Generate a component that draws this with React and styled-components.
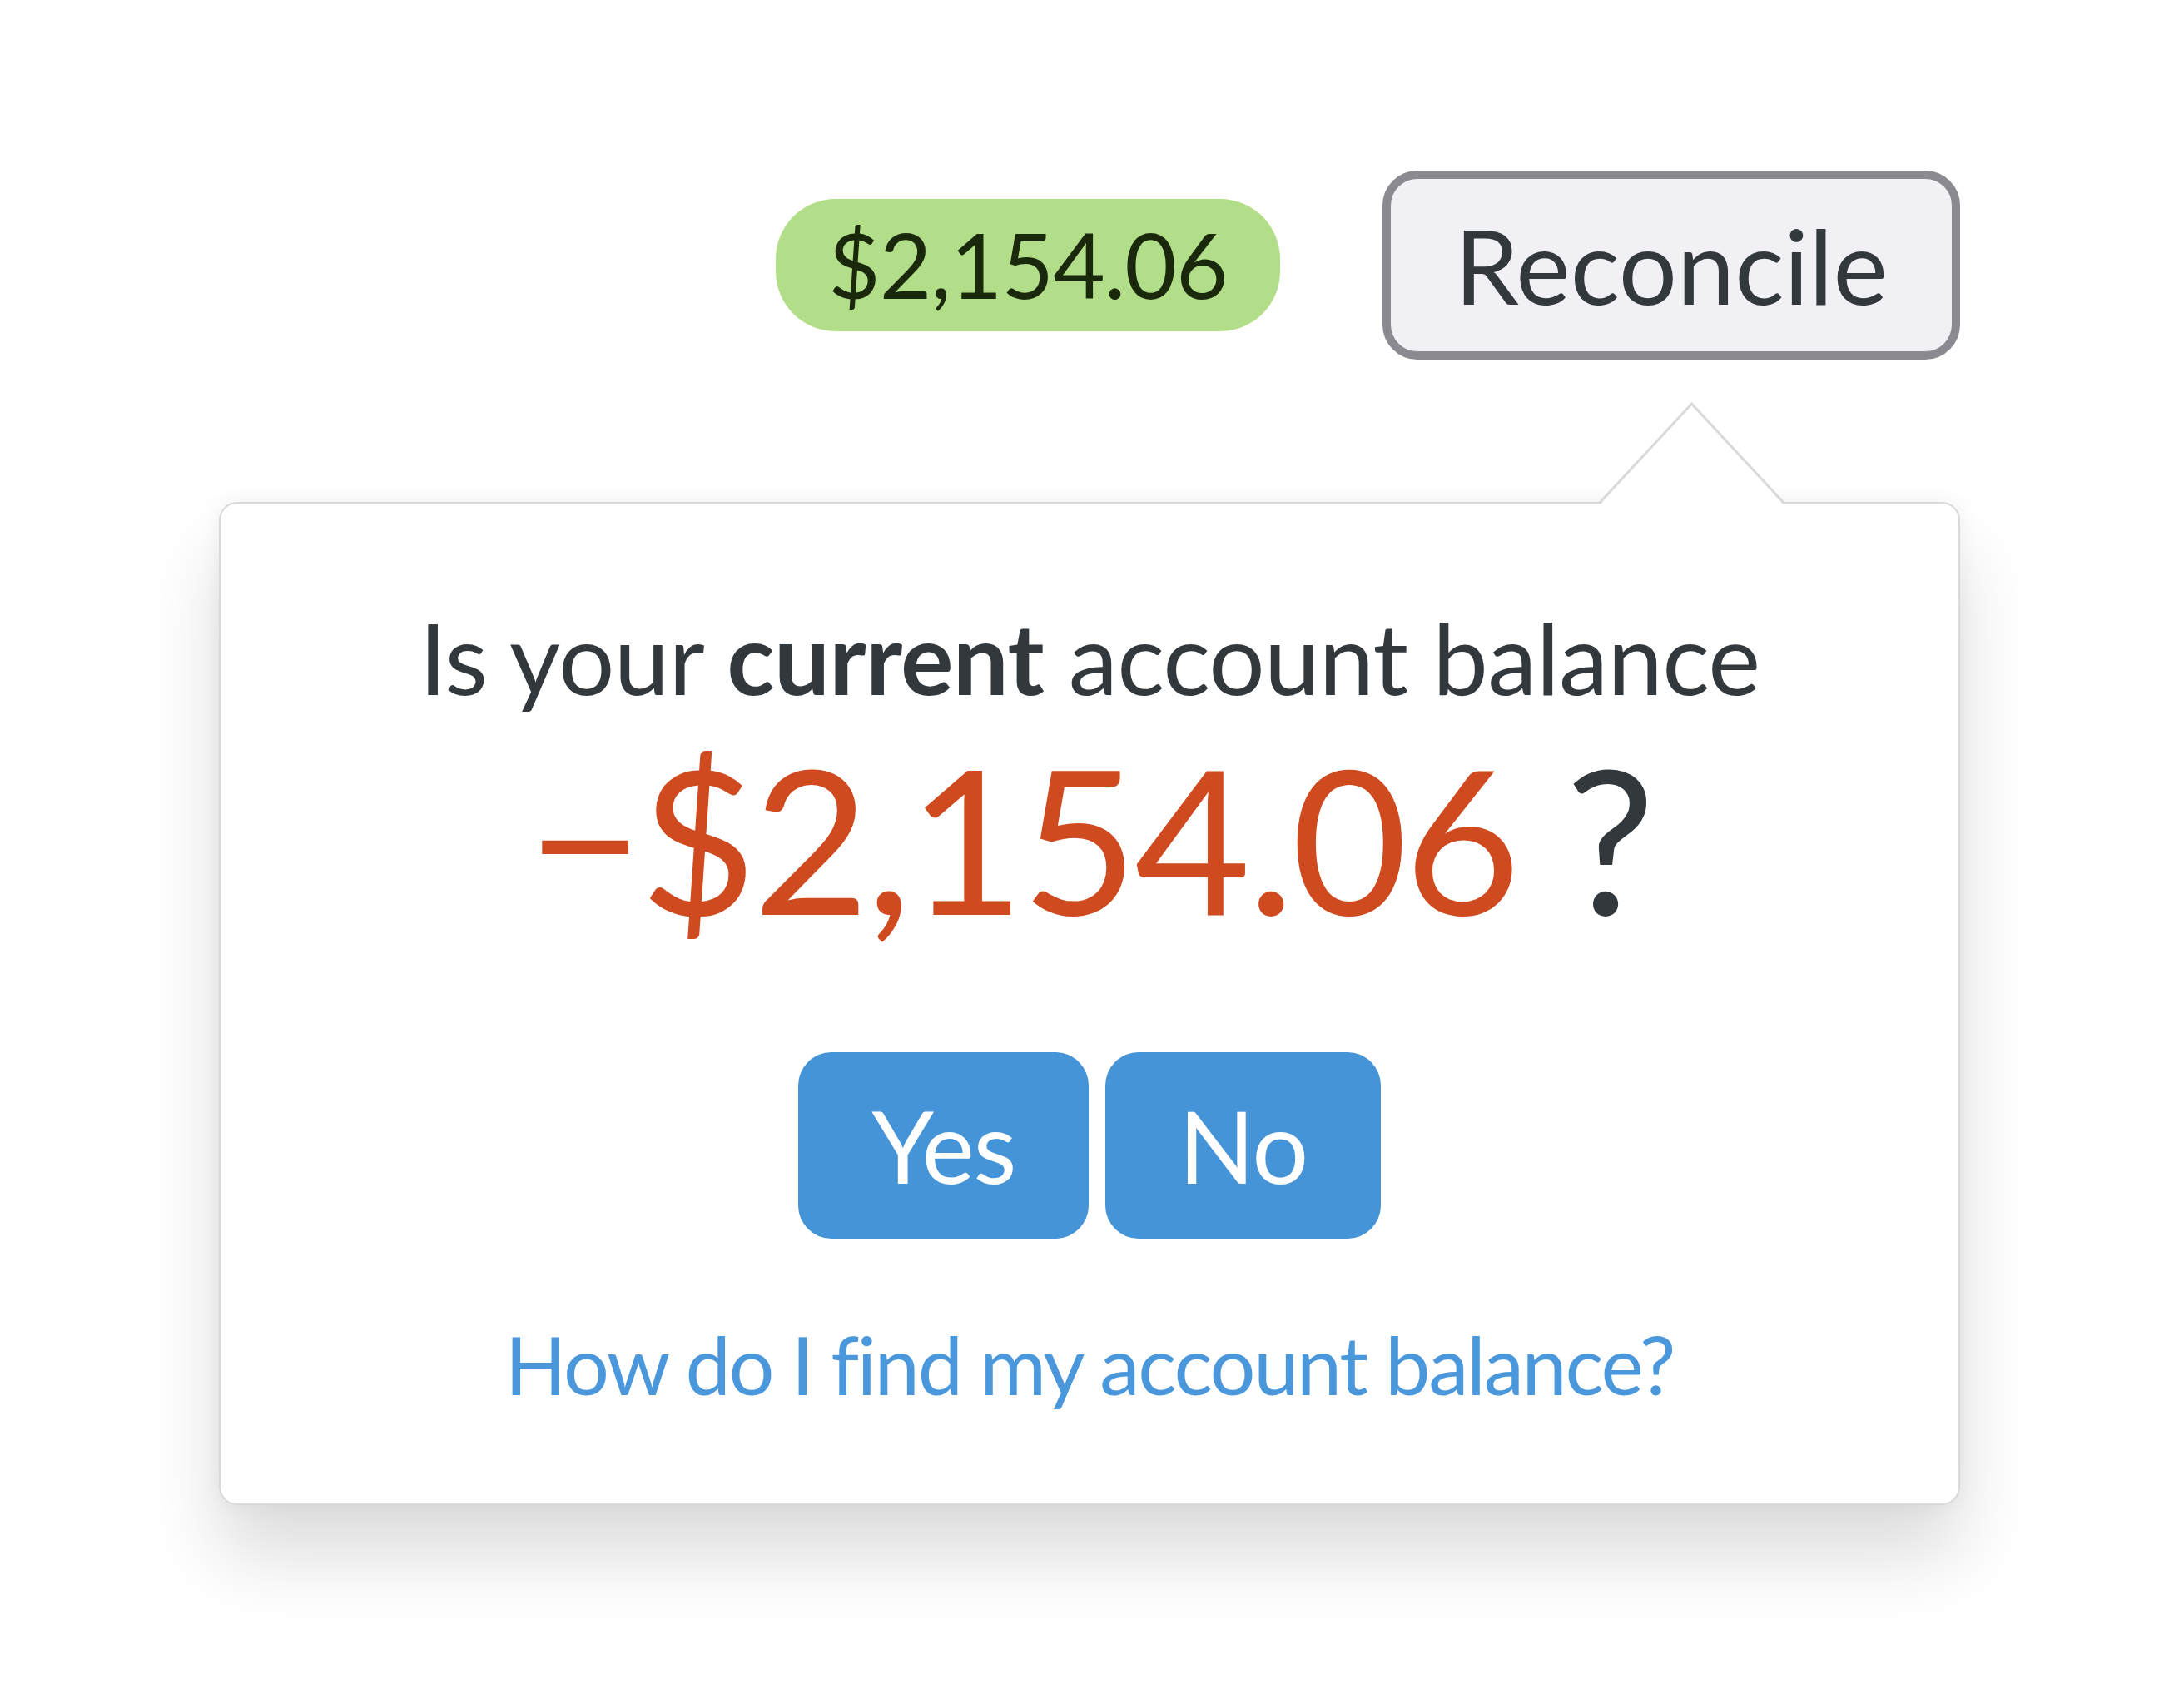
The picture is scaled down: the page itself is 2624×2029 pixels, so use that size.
import React from 'react';
import styled, { createGlobalStyle } from 'styled-components';

const GlobalStyle = createGlobalStyle`
  html, body {
    margin: 0;
    padding: 0;
    background: #ffffff;
  }
  body {
    font-family: Lato, "Noto Sans", sans-serif;
    color: #33383c;
  }
`;

const Page = styled.div`
  width: 2092px;
  margin-left: 263px;
  padding: 205px 0 220px;
  display: flex;
  flex-direction: column;
`;

const Toolbar = styled.div`
  display: flex;
  justify-content: flex-end;
  align-items: center;
  gap: 123px;
`;

const Balance = styled.span`
  display: inline-block;
  background: #b3de89;
  color: #1a280c;
  font-size: 108px;
  line-height: 1.2;
  padding: 14px 63px 15px;
  border-radius: 72px;
  letter-spacing: -1px;
`;

const ReconcileButton = styled.button`
  font-family: Lato, "Noto Sans", sans-serif;
  font-size: 124px;
  line-height: 1.2;
  color: #33383c;
  background: #f1f0f5;
  border: 10px solid #8b8a90;
  border-radius: 42px;
  padding: 29px 77px;
  cursor: pointer;
`;

const Popover = styled.div`
  position: relative;
  margin-top: 171px;
  background: #ffffff;
  border: 2px solid #d9d9d9;
  border-radius: 22px;
  box-shadow: 0 60px 90px rgba(0, 0, 0, 0.14), 0 0 24px rgba(0, 0, 0, 0.05);
  padding: 113px 40px 109px;
  display: flex;
  flex-direction: column;
  align-items: center;
`;

const Arrow = styled.svg`
  position: absolute;
  top: -121px;
  left: 1656px;
  width: 223px;
  height: 123px;
  overflow: visible;
`;

const Question = styled.div`
  font-size: 119px;
  line-height: 1.2;
  color: #33383c;
  text-align: center;
  letter-spacing: -0.7px;

  strong {
    font-weight: 700;
  }
`;

const Amount = styled.div`
  font-size: 241px;
  line-height: 1.2;
  color: #33383c;
  text-align: center;
  letter-spacing: -4px;
`;

const Negative = styled.span`
  color: #cf4a1f;
`;

const Answers = styled.div`
  display: flex;
  gap: 20px;
  margin-top: 114px;
`;

const AnswerButton = styled.button`
  font-family: Lato, "Noto Sans", sans-serif;
  font-size: 120px;
  line-height: 1.2;
  letter-spacing: -1.5px;
  color: #ffffff;
  background: #4594d8;
  border: none;
  border-radius: 40px;
  padding: 40px 88px;
  cursor: pointer;
`;

const HelpLink = styled.a`
  margin-top: 93px;
  font-size: 97px;
  line-height: 1.2;
  color: #4a98db;
  text-decoration: none;
  letter-spacing: -2.3px;
`;

export default function App() {
  return (
    <>
      <GlobalStyle />
      <Page>
        <Toolbar>
          <Balance>$2,154.06</Balance>
          <ReconcileButton>Reconcile</ReconcileButton>
        </Toolbar>
        <Popover>
          <Arrow viewBox="0 0 223 123">
            <polygon points="1,123 111.5,2 222,123" fill="#ffffff" />
            <polyline
              points="0,121 111.5,1 223,121"
              fill="none"
              stroke="#d9d9d9"
              strokeWidth="3"
            />
          </Arrow>
          <Question>
            Is your <strong>current</strong> account balance
          </Question>
          <Amount>
            <Negative>−$2,154.06</Negative> ?
          </Amount>
          <Answers>
            <AnswerButton>Yes</AnswerButton>
            <AnswerButton>No</AnswerButton>
          </Answers>
          <HelpLink href="#">How do I find my account balance?</HelpLink>
        </Popover>
      </Page>
    </>
  );
}
